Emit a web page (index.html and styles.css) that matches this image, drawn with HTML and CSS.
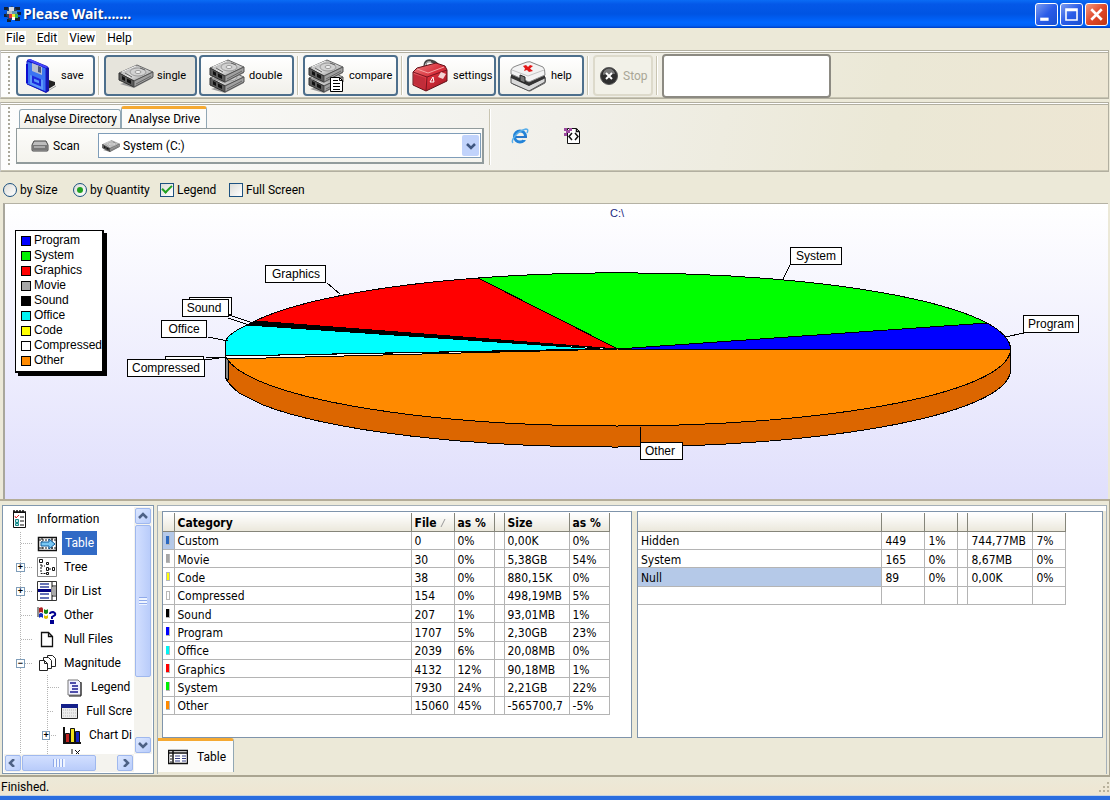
FILE: index.html
```html
<!DOCTYPE html>
<html lang="en">
<head>
<meta charset="utf-8">
<title>Please Wait.......</title>
<link rel="stylesheet" href="styles.css">
</head>
<body>
<svg class="defs" aria-hidden="true">
  <defs>
    <linearGradient id="metal" x1="0" y1="0" x2="1" y2="1"><stop offset="0" stop-color="#8d8d8d"/><stop offset=".5" stop-color="#e2e2e2"/><stop offset="1" stop-color="#7a7a7a"/></linearGradient>
    <linearGradient id="redcase" x1="0" y1="0" x2="1" y2="1"><stop offset="0" stop-color="#f08080"/><stop offset=".5" stop-color="#d8303c"/><stop offset="1" stop-color="#9c1420"/></linearGradient>
    <symbol id="drive" viewBox="0 0 36 24">
      <path d="M2 20 16 24 35 14 35 11z" fill="#9a9a9a"/>
      <path d="M1 9 19 1 35 8 16 17z" fill="url(#metal)" stroke="#6a6a6a"/>
      <path d="M1 9 16 17V23L1 16z" fill="#5b5b5b" stroke="#333"/>
      <path d="M16 17 35 8V13L16 23z" fill="#a0a0a0" stroke="#555"/>
      <path d="M4 12 7 13.500V17L4 15.500zM9 14.500 13 16.500V20L9 18z" fill="#111"/>
      <ellipse cx="20" cy="8" rx="8" ry="4" fill="#d2d2d2" stroke="#999"/>
      <ellipse cx="20" cy="8" rx="3" ry="1.500" fill="#f6f6f6" stroke="#999"/>
      <path d="M7 9 14 13M22 4 27 6M18 20 33 12" stroke="#666" fill="none"/>
      <path d="M4 8 18 2" stroke="#eee"/>
    </symbol>
  </defs>
</svg>

<div class="window">
  <header class="titlebar">
    <svg class="app-icon" viewBox="0 0 18 18" aria-hidden="true">
      <path d="M1 2h4v3H1zM12 2h5v3h-5zM1 9h4v3H1zM12 12h5v4h-5zM4 14h4v3H4zM14 7h4v3h-4z" fill="#132033"/>
      <path d="M5 3 9 1l4 3 2 5-3 5-6 1-3-5z" fill="#28405f"/>
      <path d="M6 2h5v4H6z" fill="#d7dce2"/><path d="M4 6h5v3H4z" fill="#b9c4c4"/>
      <path d="M9 6h5v3H9z" fill="#5d98b8"/><path d="M6 9h3v4H6z" fill="#e3343c"/>
      <path d="M9 9h3v3H9z" fill="#f6e432"/><path d="M12 9h3v4h-3z" fill="#43b94a"/><path d="M9 12h3v3H9z" fill="#fff"/>
    </svg>
    <h1 class="title">Please Wait.......</h1>
    <button class="win-btn" aria-label="Minimize"><svg viewBox="0 0 20 20"><path d="M4 13h8v3H4z" fill="#fff"/></svg></button>
    <button class="win-btn" aria-label="Maximize"><svg viewBox="0 0 20 20"><path d="M4 4h12v12H4zM5.500 7v7.500h9V7z" fill="#fff" fill-rule="evenodd"/></svg></button>
    <button class="win-btn close" aria-label="Close"><svg viewBox="0 0 20 20"><path d="M5 5 15 15M15 5 5 15" stroke="#fff" stroke-width="2.500"/></svg></button>
  </header>

  <nav class="menu">
    <button>File</button><button>Edit</button><button>View</button><button>Help</button>
  </nav>

  <div class="band toolbar">
    <span class="grip"></span>
    <button class="tool save">
      <svg class="i-save" viewBox="0 0 30 36" aria-hidden="true">
        <path d="M19 33 29 27 29 24 20 21z" fill="#222"/><path d="M20 34 30 28" stroke="#999"/>
        <path d="M1 2 4 1 21 8 23 10V33L20 35 1 26z" fill="#1717a8"/>
        <path d="M1 3 20 10V34L1 26z" fill="#3b74f2" stroke="#1515c8"/>
        <path d="M6 5 16 9V17L6 13z" fill="#b9bfcf"/><path d="M12 8 15 9V15L12 14z" fill="#4d5678"/>
        <path d="M4 17 17 22V32L4 26z" fill="#5c97fa"/>
        <path d="M7 19 14 22V27L7 24z" fill="none" stroke="#1b28dd" stroke-width="2"/>
        <path d="M1 2 4 1 22 9 20 10z" fill="#4545ff"/><path d="M1 6V25" stroke="#0b0bd0" stroke-width="2"/>
      </svg>
      <span>save</span>
    </button>
    <span class="sep"></span>
    <button class="tool single pressed" aria-pressed="true"><svg class="i-drive" aria-hidden="true"><use href="#drive"/></svg><span>single</span></button>
    <button class="tool double">
      <svg class="i-double" viewBox="0 0 36 34" aria-hidden="true"><use href="#drive" y="10" width="36" height="24"/><use href="#drive" width="36" height="24"/></svg><span>double</span></button>
    <span class="sep"></span>
    <button class="tool compare">
      <svg class="i-double" viewBox="0 0 36 34" aria-hidden="true"><use href="#drive" y="10" width="36" height="24"/><use href="#drive" width="36" height="24"/>
        <path d="M22.500 18.500h9l3 3v11h-12z" fill="#fff" stroke="#000"/><path d="M31.500 18.500v3h3M25 21.500h5M25 24.500h7M25 27.500h7M25 30.500h7" stroke="#000" fill="none"/></svg><span>compare</span></button>
    <span class="sep"></span>
    <button class="tool settings">
      <svg class="i-double" viewBox="0 0 36 34" aria-hidden="true">
        <path d="M13 10C12 3 15 1 19 2 24 3 26 5 25 9" fill="none" stroke="#444" stroke-width="3"/><path d="M13 9C13 4 15 2 19 3" fill="none" stroke="#ddd"/>
        <path d="M1 13 5 9 24 4 33 7 35 11V22L14 32 1 26z" fill="url(#redcase)" stroke="#611018"/>
        <path d="M1 13 15 18 35 11M15 18 14 32" fill="none" stroke="#7a1420"/><path d="M5 10 16 14 32 8" fill="none" stroke="#f6a5a5"/>
        <path d="M2 15 13 19V30L2 25z" fill="#c12d3a"/>
        <path d="M18 23 21 18 22 23z" fill="none" stroke="#fff"/><path d="M26 18 29 13 34 15 31 20z" fill="#f3d3d3"/>
      </svg><span>settings</span></button>
    <button class="tool help">
      <svg class="i-double" viewBox="0 0 36 34" aria-hidden="true">
        <path d="M1 17 18 11 36 19 35 24 20 32 3 25z" fill="#b6b6b6" stroke="#666"/>
        <path d="M1 18 19 26 35 19V23L19 32 1 24z" fill="#d9d9d9" stroke="#555"/>
        <path d="M1 15 19 23 35 16V19L19 27 1 19z" fill="#333"/>
        <path d="M1 11Q2 8 6 7L17 3Q20 2 23 4L33 8Q35 9 35 16L19 23 1 15z" fill="#f3f3f3" stroke="#888"/>
        <path d="M2 11 18 17 34 11" fill="none" stroke="#c4c4c4"/>
        <path d="M10 16 15 18V24L10 22z" fill="#777" stroke="#222"/>
        <path d="M13 7 16 6 18 8 20 6 23 7 20 9.500 23 12 19 13 17 11 14 12 15 9.500z" fill="#e41818"/>
      </svg><span>help</span></button>
    <span class="sep"></span>
    <button class="tool stop" disabled>
      <svg class="i-stop" viewBox="0 0 18 18" aria-hidden="true"><circle cx="9" cy="9" r="8.500" fill="#2e2e2e" stroke="#555"/><path d="M3 8A6 6 0 0 1 15 7Q9 6 3 8" fill="#777"/><path d="M6 6 12 12M12 6 6 12" stroke="#fff" stroke-width="2"/></svg><span>Stop</span></button>
    <span class="sep"></span>
    <div class="readout"></div>
  </div>

  <div class="band drivebar">
    <span class="grip"></span>
    <section class="tabs">
      <div class="tab-row"><button class="tab">Analyse Directory</button><button class="tab active">Analyse Drive</button></div>
      <div class="tab-body">
        <button class="scan"><svg class="i-small" viewBox="0 0 18 12" aria-hidden="true"><path d="M3 1h12l2 4v5q0 1-1 1H2q-1 0-1-1V5z" fill="#bdbdbd" stroke="#444"/><path d="M1 5h16v5H1z" fill="#777"/><path d="M3 7h11" stroke="#ddd"/></svg><span>Scan</span></button>
        <label class="drive-select">
          <svg class="i-small" aria-hidden="true"><use href="#drive"/></svg>
          <select aria-label="Drive"><option>System (C:)</option></select>
          <span class="drop"><svg viewBox="0 0 10 8"><path d="M1 2 5 6 9 2" fill="none" stroke="#3f5680" stroke-width="2.500"/></svg></span>
        </label>
      </div>
    </section>
    <span class="sep tall"></span>
    <button class="plain ie" aria-label="Browser"><svg viewBox="0 0 18 18"><circle cx="9" cy="9.500" r="5.500" fill="none" stroke="#2484d8" stroke-width="3"/><path d="M5 9h11v2H5z" fill="#2878cc"/><path d="M12 11h5v2h-5z" fill="#f1f0e8"/><path d="M2 16C-1 14 6 4 15 2q3 0 1 4" fill="none" stroke="#58aeea" stroke-width="1.500"/></svg></button>
    <button class="plain" aria-label="XML"><svg viewBox="0 0 18 18"><path d="M4.500 1.500h9l3 3v12h-12z" fill="#fff" stroke="#111"/><path d="M13.500 1.500v3h3M9 6 6 9.500 9 13M12 6 15 9.500 12 13" fill="none" stroke="#111" stroke-width="1.500"/><path d="M1 1h3v3H1zM6 1h3v3H6zM3 3h4v3H3zM1 6h3v3H1z" fill="#9c4ba0"/></svg></button>
  </div>

  <form class="options">
    <label class="o1"><input type="radio" name="mode"><span>by Size</span></label>
    <label class="o2"><input type="radio" name="mode" checked><span>by Quantity</span></label>
    <label class="o3"><input type="checkbox" checked><span>Legend</span></label>
    <label><input type="checkbox"><span>Full Screen</span></label>
  </form>

  <main class="chart">
    <svg class="pie" viewBox="5 204 1103 295" role="img" aria-label="Files on C:\ by category">
      <text x="610" y="217" class="chart-title">C:\</text>
      <g class="slices">
        <path d="M225 356V377Q228 384 239 393L263 405A392.500 77 0 0 0 618 447A392.500 77 0 0 0 1010.500 370V349z" fill="#dc6600"/>
        <path d="M225 356V377L228 380V359z" fill="#888"/>
        <path d="M618 349H1010.500A392.500 77 0 0 0 987 323z" fill="#0000ff"/>
        <path d="M618 349 987 323A392.500 77 0 0 0 478 278z" fill="#00ff00"/>
        <path d="M618 349 478 278A392.500 77 0 0 0 255 321z" fill="#ff0000"/>
        <path d="M618 349 255 321 247 325z" fill="#000"/>
        <path d="M600 349 247 325Q225 335 225 344V356z" fill="#00ffff"/>
        <path d="M618 349 225 356 227 359z" fill="#fff"/>
        <path d="M618 349 227 359A392.500 77 0 0 0 618 426A392.500 77 0 0 0 1010.500 349z" fill="#ff8a00"/>
      </g>
      <path class="leader" d="M327 283 340 294M790 265 783 279M1024 333 1005 337M640 427V443M229 315 253 323M228 318 249 325M208 337 228 341M206 357H226M205 360 226 357"/>
      <g class="tag">
        <rect x="189.500" y="297.500" width="42" height="17"/><rect x="165.500" y="356.500" width="38" height="17"/>
        <rect x="265.500" y="265.500" width="60" height="17"/><rect x="790.500" y="247.500" width="51" height="17"/>
        <rect x="1023.500" y="315.500" width="55" height="17"/><rect x="640.500" y="442.500" width="42" height="17"/>
        <rect x="182.500" y="299.500" width="46" height="17"/><rect x="161.500" y="320.500" width="45" height="17"/>
        <rect x="127.500" y="359.500" width="77" height="17"/>
      </g>
      <g class="tag-text">
        <text x="296" y="278">Graphics</text><text x="816" y="260">System</text><text x="1051" y="328">Program</text>
        <text x="660" y="455">Other</text><text x="204" y="312">Sound</text><text x="184" y="333">Office</text><text x="166" y="372">Compressed</text>
      </g>
    </svg>
    <ul class="legend">
      <li><i class="sw c-program"></i>Program</li><li><i class="sw c-system"></i>System</li><li><i class="sw c-graphics"></i>Graphics</li>
      <li><i class="sw c-movie"></i>Movie</li><li><i class="sw c-sound"></i>Sound</li><li><i class="sw c-office"></i>Office</li>
      <li><i class="sw c-code"></i>Code</li><li><i class="sw c-compressed"></i>Compressed</li><li><i class="sw c-other"></i>Other</li>
    </ul>
  </main>

  <div class="lower">
    <aside class="tree-pane">
      <ul class="tree">
        <li class="root"><svg viewBox="0 0 20 20"><path d="M4.500 3.500h12v15h-12z" fill="#fff" stroke="#111"/><path d="M4 3h13M5 1v3M8 1v3M11 1v3M14 1v3" stroke="#111" stroke-width="1.500"/><path d="M11 8h4M11 12h4M11 16h4" stroke="#111"/><path d="M6 7l1 2 3-3" stroke="#d22" fill="none"/><path d="M6.500 10.500h3v3h-3zM6.500 14.500h3v2h-3z" fill="#bfe6e6" stroke="#188"/></svg><span>Information</span></li>
        <li class="kid"><svg viewBox="0 0 20 20"><path d="M1.500 4.500h18v13h-18z" fill="#fff" stroke="#111" stroke-width="1.500"/><path d="M2 7h17M2 15h17M5 5v12M15 5v12" stroke="#111" stroke-dasharray="2 1"/><path d="M4 9h8V6l6 5-6 5v-3H4z" fill="#79c8f4" stroke="#115c9c"/></svg><span class="selected">Table</span></li>
        <li class="kid"><b class="box">+</b><svg viewBox="0 0 20 20"><path d="M.5.500h19v19H.5z" fill="#fff" stroke="#888"/><path d="M2.500 2.500h3v3h-3zM9.500 5.500h2v2h-2zM9.500 10.500h2v3h-2zM15.500 10.500h2v3h-2zM9.500 15.500h2v2h-2z" fill="#fff" stroke="#111"/><path d="M4 7V16.500H9M4 9H8M12 12h3" fill="none" stroke="#111" stroke-dasharray="2 1"/></svg><span>Tree</span></li>
        <li class="kid"><b class="box">+</b><svg viewBox="0 0 20 20"><path d="M.5.500h19v19H.5z" fill="#fff" stroke="#333"/><path d="M15 1v18M15 5h4M15 15h4" stroke="#111"/><path d="M15 6h4v8h-4z" fill="#aaa"/><path d="M3 3h9M3 6h9M3 13h9M3 17h9" stroke="#3344a0" stroke-width="1.500"/><path d="M1 8h13v3H1z" fill="#000080"/></svg><span>Dir List</span></li>
        <li class="kid"><svg viewBox="0 0 20 20"><path d="M2 3q4-2 4 1v4q-2-2-4 0z" fill="#b02020"/><path d="M7 4q2 2 4 0v4q-2 2-4 0z" fill="#168a16"/><path d="M2 9q2-2 4 0v4q-2-2-4 0z" fill="#1030c0"/><path d="M7 10q2 2 4 0v3q-2 2-4 0z" fill="#e0c000"/><path d="M1 2v10" stroke="#222"/><path d="M13 9q0-2 3-2 3 1 2 3l-3 2v2M14 16h2v2h-2z" fill="none" stroke="#000090" stroke-width="2"/></svg><span>Other</span></li>
        <li class="kid"><svg viewBox="0 0 20 20"><path d="M4.500 3.500h7l4 4v10h-11zM11.500 3.500v4h4" fill="#fff" stroke="#111" stroke-width="1.300"/></svg><span>Null Files</span></li>
        <li class="kid"><b class="box">−</b><svg viewBox="0 0 20 20"><g fill="#fff" stroke="#222"><path d="M10.500 2.500h5l3 3v8h-8z"/><path d="M6.500 4.500h5l3 3v8h-8z"/><path d="M2.500 7.500h5l3 3v7h-8zM7.500 7.500v3h3"/></g></svg><span>Magnitude</span></li>
        <li class="grandkid"><svg viewBox="0 0 20 20"><path d="M4 3h10l3 3v12H4z" fill="#f2f2ff" stroke="#777"/><path d="M17 5v14H5" fill="none" stroke="#111"/><path d="M6 6h6M8 9h6M8 12h6M6 15h8" stroke="#1a1a90" stroke-width="1.500"/></svg><span>Legend</span></li>
        <li class="grandkid"><svg viewBox="0 0 20 20"><path d="M2.500 4.500h16v13h-16z" fill="#ececec" stroke="#222"/><path d="M2 3h17v4H2z" fill="#14208a"/><path d="M4 9h13M4 12h13M4 15h13" stroke="#bbb" stroke-dasharray="1 1"/></svg><span>Full Scre</span></li>
        <li class="grandkid"><b class="box">+</b><svg viewBox="0 0 20 20"><path d="M2 2v16h17" fill="none" stroke="#111" stroke-width="2"/><path d="M3.500 8.500h4v9h-4z" fill="#c02020" stroke="#111"/><path d="M8.500 3.500h4v14h-4z" fill="#f2e01a" stroke="#111"/><path d="M13.500 6.500h4v11h-4z" fill="#1622c8" stroke="#111"/></svg><span>Chart Di</span></li>
        <li class="grandkid"><svg viewBox="0 0 20 20"><path d="M8 0v7M11 1l5 5M16 1l-5 5" stroke="#111"/></svg></li>
      </ul>
      <div class="vscroll">
        <button aria-label="Scroll up"><svg viewBox="0 0 10 8"><path d="M1 6 5 2 9 6"/></svg></button>
        <span class="thumb"><i></i></span><span class="track"></span>
        <button aria-label="Scroll down"><svg viewBox="0 0 10 8"><path d="M1 2 5 6 9 2"/></svg></button>
      </div>
      <div class="hscroll">
        <button aria-label="Scroll left"><svg viewBox="0 0 10 8"><path d="M6 0 2 4 6 8"/></svg></button>
        <span class="thumb"><i></i></span><span class="track"></span>
        <button aria-label="Scroll right"><svg viewBox="0 0 10 8"><path d="M4 0 8 4 4 8"/></svg></button>
      </div>
    </aside>

    <section class="data">
      <div class="grids">
        <div class="grid-pane">
          <table class="files">
            <colgroup><col class="w11"><col class="w237"><col class="w43"><col class="w40"><col class="w10"><col class="w65"><col class="w40"></colgroup>
            <thead><tr><th></th><th>Category</th><th>File <svg class="sort" viewBox="0 0 6 8"><path d="M1 8 5 0" stroke="#999"/></svg></th><th>as %</th><th></th><th>Size</th><th>as %</th></tr></thead>
            <tbody>
              <tr><td class="current"><i class="bar c-custom"></i></td><td>Custom</td><td>0</td><td>0%</td><td></td><td>0,00K</td><td>0%</td></tr>
              <tr><td><i class="bar c-movie"></i></td><td>Movie</td><td>30</td><td>0%</td><td></td><td>5,38GB</td><td>54%</td></tr>
              <tr><td><i class="bar c-code"></i></td><td>Code</td><td>38</td><td>0%</td><td></td><td>880,15K</td><td>0%</td></tr>
              <tr><td><i class="bar c-compressed"></i></td><td>Compressed</td><td>154</td><td>0%</td><td></td><td>498,19MB</td><td>5%</td></tr>
              <tr><td><i class="bar c-sound"></i></td><td>Sound</td><td>207</td><td>1%</td><td></td><td>93,01MB</td><td>1%</td></tr>
              <tr><td><i class="bar c-program"></i></td><td>Program</td><td>1707</td><td>5%</td><td></td><td>2,30GB</td><td>23%</td></tr>
              <tr><td><i class="bar c-office"></i></td><td>Office</td><td>2039</td><td>6%</td><td></td><td>20,08MB</td><td>0%</td></tr>
              <tr><td><i class="bar c-graphics"></i></td><td>Graphics</td><td>4132</td><td>12%</td><td></td><td>90,18MB</td><td>1%</td></tr>
              <tr><td><i class="bar c-system"></i></td><td>System</td><td>7930</td><td>24%</td><td></td><td>2,21GB</td><td>22%</td></tr>
              <tr><td><i class="bar c-other"></i></td><td>Other</td><td>15060</td><td>45%</td><td></td><td>-565700,7</td><td>-5%</td></tr>
            </tbody>
          </table>
        </div>
        <div class="grid-pane">
          <table class="flags">
            <colgroup><col class="w244"><col class="w43"><col class="w33"><col class="w10"><col class="w65"><col class="w33"></colgroup>
            <thead><tr><th></th><th></th><th></th><th></th><th></th><th></th></tr></thead>
            <tbody>
              <tr><td>Hidden</td><td>449</td><td>1%</td><td></td><td>744,77MB</td><td>7%</td></tr>
              <tr><td>System</td><td>165</td><td>0%</td><td></td><td>8,67MB</td><td>0%</td></tr>
              <tr><td class="current">Null</td><td>89</td><td>0%</td><td></td><td>0,00K</td><td>0%</td></tr>
              <tr><td></td><td></td><td></td><td></td><td></td><td></td></tr>
            </tbody>
          </table>
        </div>
      </div>
      <div class="bottom-tabs">
        <button class="bottom-tab"><svg viewBox="0 0 20 16"><path d="M.5 1.500h19v13H.5z" fill="#fff" stroke="#111" stroke-width="1.500"/><path d="M1 4h18M5 2v13" stroke="#111" stroke-width="1.500"/><path d="M7 7h5M7 9.500h5M7 12h5M14 7h4M14 9.500h4M14 12h4" stroke="#333c80"/><path d="M2 7h2M2 10h2M2 13h2" stroke="#111"/></svg><span>Table</span></button>
      </div>
    </section>
  </div>

  <footer class="status"><span>Finished.</span>
    <svg class="resize" viewBox="0 0 12 12" aria-hidden="true"><path d="M9 1h2v2H9zM5 5h2v2H5zM9 5h2v2H9zM1 9h2v2H1zM5 9h2v2H5zM9 9h2v2H9z" fill="#b8b29c"/></svg>
  </footer>
</div>
</body>
</html>
```

FILE: styles.css
```css
* { box-sizing: border-box; }
body { margin: 0; font: 12px/16px Roboto, "Liberation Sans", sans-serif; color: #000; background: #ece9d8; }
button { font: inherit; color: inherit; margin: 0; padding: 0; border: 0; background: none; }
svg { display: block; flex: none; }
ul { list-style: none; margin: 0; padding: 0; }
.defs { position: absolute; width: 0; height: 0; }
.window { display: flex; flex-direction: column; min-height: 100vh; border-bottom: 4px solid #2a6ddf; }

.titlebar { display: flex; align-items: center; gap: 2px; height: 28px; padding: 0 2px 0 3px;
  background: linear-gradient(#0a6cf5 0, #0458e8 15%, #0054e3 50%, #0066ff 80%, #0060f5 92%, #003cc0 100%); }
.app-icon { width: 18px; height: 18px; }
.title { flex: 1; margin: 0; font: bold 14px/20px "Noto Sans", sans-serif; color: #fff; text-shadow: 1px 1px 1px #0a2a80; }
.win-btn { width: 23px; height: 23px; border: 1px solid #fff; border-radius: 3px; background: linear-gradient(135deg, #7c9cf0, #2a5ce8 50%, #1a50d0); }
.win-btn svg { width: 21px; height: 21px; }
.win-btn.close { background: linear-gradient(135deg, #f09a80, #e0482a 50%, #c03814); }

.menu { display: flex; gap: 10px; height: 22px; padding: 3px 5px; }
.menu button { background: #fff; height: 14px; line-height: 14px; padding: 0 1px; }

.band { display: flex; align-items: center; border: 1px solid #b2afa0; border-left-color: #ccc; box-shadow: inset 0 1px #fff, inset 0 2px #b2afa0, inset 0 -1px #c8c5b2;
  background: linear-gradient(100deg, #fdfdfd, #f1f0ea 50%, #ebe8d6 80%, #ede6d3); margin-right: 1px; }
.toolbar { height: 49px; padding: 2px 0 0 7px; }
.grip { width: 2px; height: 40px; margin-right: 6px; background: repeating-linear-gradient(#aaa79a 0 2px, transparent 2px 4px); }
.tool { display: flex; align-items: center; height: 41px; border: 2px solid #4d6f8c; border-radius: 4px; background: linear-gradient(#fff, #f1f0ea); padding: 0 0 0 8px; gap: 5px; margin-right: 2px; font-size: 11px; }
.pressed { background: #e6e4dc; }
.save { width: 79px; }
.single { width: 93px; padding-left: 12px; gap: 3px; }
.double { width: 95px; gap: 4px; }
.compare { width: 95px; padding-left: 3px; }
.settings { width: 89px; padding-left: 3px; }
.help { width: 86px; padding-left: 10px; }
.stop { width: 60px; padding-left: 5px; border-color: #dddacb; color: #a9a696; background: #f2f1e8; font-size: 12px; }
.i-save { width: 30px; height: 36px; }
.i-drive { width: 36px; height: 24px; }
.i-double { width: 36px; height: 34px; }
.i-stop { width: 18px; height: 18px; }
.sep { width: 2px; height: 39px; margin: 0 4px 0 1px; border-left: 1px solid #c9c5b2; border-right: 1px solid #fff; }
.readout { width: 169px; height: 44px; border: 2px solid #8c8a82; border-radius: 4px; background: #fff; }

.drivebar { height: 70px; margin-top: 3px; padding-left: 7px; }
.drivebar .grip { height: 60px; }
.tabs { width: 468px; align-self: flex-start; margin-top: 3px; }
.tab-row { display: flex; align-items: flex-end; height: 22px; padding-left: 3px; }
.tab { height: 19px; padding: 0 3px 0 4px; border: 1px solid #91a7b4; border-bottom: 0; border-radius: 3px 3px 0 0; background: linear-gradient(#fff, #f0efe8); }
.tab.active { height: 22px; padding: 0 6px; border-top: 3px solid #f5a932; background: #fcfcfa; }
.tab-body { display: flex; align-items: center; height: 36px; padding: 0 1px 0 11px; border: 1px solid #919b9c; background: linear-gradient(#fcfcfa, #f5f4ee); border-right-width: 2px; border-bottom-width: 2px; }
.scan { display: flex; align-items: center; gap: 4px; width: 70px; padding-left: 3px; }
.i-small { width: 18px; height: 12px; }
.drive-select { flex: 1; display: flex; align-items: center; height: 25px; border: 1px solid #7f9db9; background: #fff; padding: 0 1px 0 3px; gap: 3px; }
.drive-select select { flex: 1; appearance: none; border: 0; background: none; font: inherit; color: #000; padding: 0; }
.drop { display: flex; align-items: center; justify-content: center; width: 17px; height: 21px; border-radius: 2px; background: #c1d3fb; }
.drop svg { width: 10px; height: 8px; }
.sep.tall { height: 56px; margin: 0 20px 0 5px; }
.plain { width: 18px; height: 18px; margin-bottom: 2px; }
.ie { margin-right: 34px; }

.options { display: flex; align-items: center; height: 27px; margin-top: 4px; padding-left: 3px; }
.options label { display: flex; align-items: center; gap: 3px; }
.o1 { width: 70px; }
.o2 { width: 87px; }
.o3 { width: 69px; }
.options input { appearance: none; width: 14px; height: 14px; margin: 0; border: 1px solid #1c5180; background: linear-gradient(135deg, #dcdcd7, #fff); display: grid; place-items: center; }
.options input[type=radio] { border-radius: 50%; }
.options input[type=radio]:checked::before { content: ""; width: 6px; height: 6px; border-radius: 50%; background: #21a121; }
.options input[type=checkbox]:checked::before { content: ""; width: 8px; height: 4px; margin-bottom: 3px; border: solid #21a121; border-width: 0 0 2px 2px; transform: rotate(-45deg); }

.chart { position: relative; margin: 0 2px 0 3px; height: 296px; border-left: 2px solid #a9a79c; border-top: 1px solid #b5b2a4; background: linear-gradient(#fff, #e0dffc); }
.pie { width: 100%; height: 100%; }
.pie text { font: 11px "Liberation Sans", sans-serif; }
.pie .chart-title { fill: #1a2a80; }
.slices { stroke: #000; stroke-linejoin: round; shape-rendering: crispEdges; }
.tag rect { fill: #fff; stroke: #000; }
.pie .tag-text text { text-anchor: middle; font-size: 12px; }
.leader { fill: none; stroke: #000; shape-rendering: crispEdges; }
.legend { position: absolute; left: 10px; top: 26px; width: 89px; padding: 2px 0 3px 5px; border: 2px solid #000; border-width: 1px 2px 2px 1px; background: #fff; box-shadow: 3px 3px #000; font: 12px/15px "Liberation Sans", sans-serif; }
.legend li { display: flex; align-items: center; gap: 3px; }
.sw { width: 10px; height: 10px; border: 1px solid #000; }
.c-program { background: #0000ff; }
.c-system { background: #00f000; }
.c-graphics { background: #ff0000; }
.c-movie { background: #a6a6a6; }
.c-sound { background: #000; }
.c-office { background: #00f4f4; }
.c-code { background: #ffff00; }
.c-compressed { background: #fff; }
.c-other { background: #ff8a00; }
.c-custom { background: #2a68c0; }

.lower { flex: 1; display: flex; gap: 3px; min-height: 278px; padding: 4px 2px 1px; border-top: 2px solid #b4ad98; border-bottom: 2px solid #aaa591; border-right: 1px solid #aaa591; }
.tree-pane { display: grid; grid-template: 1fr 18px / 1fr 18px; width: 152px; height: 269px; border: 1px solid #8097ae; padding: 1px; background: #fff; }
.tree { height: 247px; overflow: hidden; background: repeating-linear-gradient(#b5b5b5 0 1px, transparent 1px 2px) 16px 25px / 1px 100% no-repeat; }
.tree li { display: flex; align-items: center; height: 24px; white-space: nowrap; }
.tree svg { width: 20px; height: 20px; }
.root { padding-left: 5px; gap: 8px; }
.kid { padding-left: 17px; gap: 5px; }
.kid svg, .grandkid svg { order: 1; }
.kid span, .grandkid span { order: 2; }
.kid::before, .grandkid::before { content: ""; width: 11px; height: 1px; background: repeating-linear-gradient(90deg, #b5b5b5 0 1px, transparent 1px 2px); }
.grandkid { margin-left: 43px; padding-left: 1px; gap: 5px; background: repeating-linear-gradient(#b5b5b5 0 1px, transparent 1px 2px) 0 0 / 1px 100% no-repeat; }
.kid span, .grandkid span { padding: 0 2px; }
.kid .selected { padding: 4px 3px; background: #316ac5; color: #fff; }
.box { order: -1; width: 9px; height: 9px; margin-left: -5px; margin-right: -9px; border: 1px solid #7f9db9; background: #fff; font: bold 9px/7px "Liberation Sans", sans-serif; text-align: center; z-index: 1; }
.grandkid .box { margin-left: -6px; margin-right: -8px; }
.vscroll, .hscroll { display: flex; background: #f4f3ee; padding: 1px; }
.vscroll { flex-direction: column; }
.vscroll button, .hscroll button, .thumb { display: flex; align-items: center; justify-content: center; width: 16px; height: 16px; border: 1px solid #9fb8ee; border-radius: 2px; background: linear-gradient(135deg, #dce7ff, #b9cdfb); }
.vscroll .thumb { flex: 153; background: linear-gradient(90deg, #d2dfff, #b9ccfa); height: auto; margin-top: 1px; }
.vscroll .track { flex: 61; }
.hscroll .thumb { width: 74px; background: linear-gradient(#d2dfff, #b9ccfa); margin-left: 1px; }
.hscroll .track { flex: 1; }
.vscroll svg, .hscroll svg { width: 10px; height: 8px; fill: none; stroke: #4d6185; stroke-width: 2.5; }
.thumb i { width: 8px; height: 8px; background: repeating-linear-gradient(#8fa9ea 0 1px, #eef4ff 1px 3px); }
.hscroll .thumb i { width: 12px; background: repeating-linear-gradient(90deg, #8fa9ea 0 1px, #eef4ff 1px 3px); }

.data { flex: 1; display: flex; flex-direction: column; border: 1px solid #a5b0b8; border-bottom: 0; min-width: 0; }
.grids { display: flex; gap: 5px; height: 232px; padding: 5px 3px 0 4px; background: linear-gradient(#fff 0 5px, #ece9d8 5px); }
.grid-pane { flex: 470; min-width: 0; border: 1px solid #7f94ab; background: #fff; overflow: hidden; padding-top: 1px; }
.grid-pane + .grid-pane { flex: 466; }
table { table-layout: fixed; border-collapse: collapse; font: 12px/14px "DejaVu Sans Condensed", "DejaVu Sans", sans-serif; }
.files { width: 446px; height: 202px; }
.flags { width: 428px; height: 92px; }
th, td { height: 18px; padding: 2px 0 0 3px; text-align: left; white-space: nowrap; border-right: 1px solid #b4b4b4; border-bottom: 1px solid #b4b4b4; }
th { background: linear-gradient(#fff, #ebe8dc); border-color: #85857a; }
.files td:first-child { padding: 0; }
.current { background: #b5c9e8; }
.bar { display: block; width: 4px; height: 9px; margin: 0 auto; border: 1px solid #b8b8b8; border-width: 0 1px 1px 0; }
.bar.c-compressed, .bar.c-code { border-width: 1px; }
.sort { display: inline-block; width: 6px; height: 8px; }
.w10 { width: 10px; } .w11 { width: 11px; } .w33 { width: 33px; } .w40 { width: 40px; } .w43 { width: 43px; }
.w65 { width: 65px; } .w237 { width: 237px; } .w244 { width: 244px; }
.bottom-tabs { height: 35px; background: #ece9d8; }
.bottom-tab { display: flex; align-items: center; gap: 9px; width: 76px; height: 34px; padding-left: 10px; border-top: 3px solid #f5a932; border-right: 1px solid #91a7b4; border-radius: 0 3px 0 0; background: #fcfcfa; }
.bottom-tab svg { width: 20px; height: 16px; }

.status { display: flex; align-items: center; justify-content: space-between; height: 19px; padding: 2px 0 0 1px; background: linear-gradient(#ece9d8, #efe6d2); border-bottom: 1px solid #c5d2e0; }
.resize { width: 12px; height: 12px; }
```
